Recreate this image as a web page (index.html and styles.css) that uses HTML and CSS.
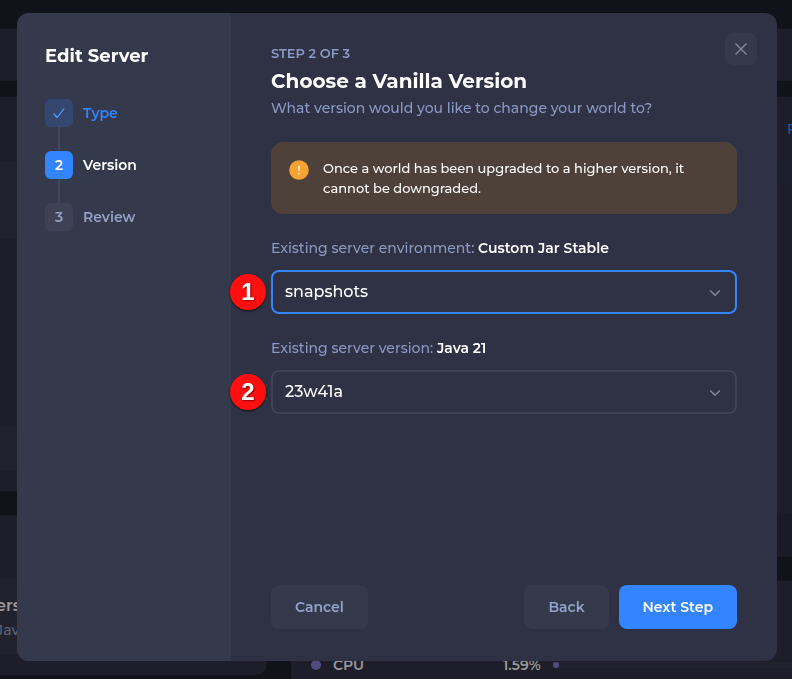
FILE: index.html
```html
<!DOCTYPE html>
<html lang="en">
<head>
<meta charset="utf-8">
<meta name="viewport" content="width=device-width, initial-scale=1">
<title>Edit Server</title>
<link rel="stylesheet" href="styles.css">
</head>
<body>
<div class="page">
  <div class="topbar"></div>
  <div class="columns">
    <div class="column">
      <section class="card card-list">
        <div class="row row-tall"></div>
        <div class="row row-short"></div>
      </section>
      <section class="card card-server">
        <div class="row server">
          <strong class="server-name">ers</strong>
          <span class="server-type">Jav</span>
        </div>
      </section>
    </div>
    <div class="column">
      <section class="card card-files">
        <a class="files-link" href="#">F</a>
        <div class="files-row"></div>
        <div class="files-foot"></div>
      </section>
      <section class="card card-stats">
        <div class="stat">
          <span class="dot"></span>
          <span class="stat-name">CPU</span>
          <span class="stat-value">1.59%</span>
          <span class="meter"><span class="meter-fill"></span></span>
        </div>
      </section>
    </div>
  </div>
</div>

<div class="overlay">
  <div class="modal" role="dialog" aria-labelledby="dialog-title">
    <aside class="side">
      <h1 class="side-title">Edit Server</h1>
      <ol class="steps">
        <li class="step done">
          <span class="step-mark"><svg width="14" height="14" viewBox="0 0 14 14" aria-hidden="true"><path d="M1.800 7.600 5 11.500 12.200 2.500"/></svg></span>
          <span>Type</span>
        </li>
        <li class="step current"><span class="step-mark">2</span><span>Version</span></li>
        <li class="step"><span class="step-mark">3</span><span>Review</span></li>
      </ol>
    </aside>
    <main class="content">
      <header class="head">
        <div>
          <p class="eyebrow">STEP 2 OF 3</p>
          <h2 class="title" id="dialog-title">Choose a Vanilla Version</h2>
          <p class="lead">What version would you like to change your world to?</p>
        </div>
        <button class="close" type="button" aria-label="Close"><svg width="14" height="14" viewBox="0 0 14 14" aria-hidden="true"><path d="M1.500 1.500l11 11M12.500 1.500l-11 11"/></svg></button>
      </header>
      <div class="notice">
        <svg class="notice-icon" width="20" height="20" viewBox="0 0 20 20" aria-hidden="true"><circle cx="10" cy="10" r="9.800"/><path d="M9.200 6h1.600l-.3 5.400H9.500z"/><circle class="point" cx="10" cy="13.700" r=".8"/></svg>
        <p>Once a world has been upgraded to a higher version, it cannot be downgraded.</p>
      </div>
      <form class="form">
        <div class="field">
          <label for="environment">Existing server environment: <b>Custom Jar Stable</b></label>
          <div class="select focused">
            <span class="callout">1</span>
            <select id="environment"><option>snapshots</option></select>
            <svg class="chevron" width="12" height="8" viewBox="0 0 12 8" aria-hidden="true"><path d="M1.200 1.500 6 6.200l4.800-4.700"/></svg>
          </div>
        </div>
        <div class="field">
          <label for="version">Existing server version: <b>Java 21</b></label>
          <div class="select">
            <span class="callout">2</span>
            <select id="version"><option>23w41a</option></select>
            <svg class="chevron" width="12" height="8" viewBox="0 0 12 8" aria-hidden="true"><path d="M1.200 1.500 6 6.200l4.800-4.700"/></svg>
          </div>
        </div>
      </form>
      <footer class="actions">
        <button class="btn cancel" type="button">Cancel</button>
        <button class="btn" type="button">Back</button>
        <button class="btn primary" type="button">Next Step</button>
      </footer>
    </main>
  </div>
</div>
</body>
</html>
```

FILE: styles.css
```css
* { box-sizing: border-box; }

body {
  margin: 0;
  background: #11131b;
  color: #fff;
  font-family: Montserrat, Inter, "Open Sans", sans-serif;
  font-size: 14px;
  line-height: 20px;
  font-weight: 500;
}

h1, h2, p, ol { margin: 0; padding: 0; }
button, select { font: inherit; }

/* Dimmed page behind the dialog */
.page {
  height: 100vh;
  overflow: hidden;
  display: flex;
  flex-direction: column;
  padding-top: 29px;
}
.topbar { flex: none; height: 52px; background: #1d1e29; }
.columns {
  flex: 1;
  min-height: 0;
  display: grid;
  grid-template-columns: 267px 1fr;
  gap: 24px;
  margin-top: 16px;
}
.column { display: flex; flex-direction: column; gap: 24px; min-width: 0; }
.card { flex: none; background: #1d1e29; }
.row { background: #21222d; }
.card-list { height: 394px; padding: 64px 0 20px; display: flex; flex-direction: column; justify-content: space-between; }
.row-tall { height: 78px; }
.row-short { height: 44px; }
.card-server { height: 160px; padding: 64px 0 20px; border-radius: 0 0 12px 0; }
.server { height: 76px; margin-left: -4px; padding-top: 17px; display: flex; flex-direction: column; align-items: flex-start; gap: 4px; color: #999; }
.server-name { font-size: 16px; font-weight: 600; }
.server-type { color: #5a647c; }
.card-files { height: 460px; padding-top: 22px; display: flex; flex-direction: column; gap: 22px; }
.files-link { align-self: flex-end; margin-right: -4px; color: #2857a0; text-decoration: none; }
.files-row { height: 24px; background: #1b202e; }
.files-foot { height: 44px; margin-top: auto; background: #1a1b26; }
.card-stats { height: 120px; padding: 74px 0 0 20px; }
.stat { display: flex; align-items: center; color: #999; font-weight: 600; }
.dot { width: 10px; height: 10px; border-radius: 50%; background: #514c80; }
.stat-name { width: 182px; padding-left: 12px; }
.stat-value { width: 50px; }
.meter { flex: 1; height: 6px; background: #21222d; }
.meter-fill { display: block; width: 6px; height: 6px; border-radius: 50%; background: #514c80; }

/* Dialog */
.overlay { position: fixed; inset: 0; display: flex; padding: 13px 15px 18px 17px; }
.modal {
  flex: 1;
  display: grid;
  grid-template-columns: 214px 1fr;
  border-radius: 12px;
  overflow: hidden;
  background: #2f3144;
}
.side { background: #35394c; padding: 30px 28px; }
.side-title { font-size: 18px; line-height: 26px; font-weight: 700; }
.steps { list-style: none; margin-top: 30px; display: grid; gap: 24px; }
.step { position: relative; display: flex; align-items: center; gap: 10px; color: #94a0c4; font-weight: 600; }
.step + .step::before { content: ""; position: absolute; left: 13px; bottom: 100%; width: 2px; height: 24px; background: #44475b; }
.step-mark { width: 28px; height: 28px; border-radius: 6px; display: grid; place-items: center; background: #3f4257; }
.done { color: #3385ff; }
.done .step-mark { background: #344770; }
.current { color: #fff; }
.current .step-mark { background: #3385ff; }
svg { display: block; fill: none; }
.done svg { stroke: #58a0ff; stroke-width: 1.2; }

.content { display: flex; flex-direction: column; padding: 20px 20px 32px 40px; min-width: 0; }
.head { display: flex; justify-content: space-between; align-items: flex-start; }
.head > div { padding-top: 10px; }
.eyebrow { font-size: 13px; font-weight: 600; color: #8b9ac4; }
.title { margin: 2px 0 1px; font-size: 20px; line-height: 32px; font-weight: 700; }
.lead { color: #8b9ac4; }
.close {
  width: 32px; height: 32px; padding: 0; border: 0; border-radius: 8px;
  background: #35394c; display: grid; place-items: center;
}
.close svg { stroke: #85879f; stroke-width: 1.4; }
.notice {
  display: flex; gap: 14px; margin: 24px 20px 0 0; padding: 16px 40px 16px 18px;
  border-radius: 12px; background: #4e4139; font-size: 13px;
}
.notice-icon { flex: none; margin-top: 2px; fill: #f6a333; }
.notice-icon path, .point { fill: #fff; }
.form { display: grid; gap: 24px; margin: 24px 20px 0 0; }
.field { display: grid; gap: 12px; }
.field label { color: #8b9ac4; }
.field b { color: #fff; font-weight: 600; }
.select { position: relative; }
.select select {
  display: block; width: 100%; height: 44px; padding: 0 40px 0 12px;
  appearance: none; border: 2px solid #3f4155; border-radius: 8px;
  background: transparent; color: #fff; font-size: 16px; outline: 0;
}
.focused select { border-color: #3385ff; }
.chevron { position: absolute; right: 16px; top: 19px; stroke: #85879f; stroke-width: 1.5; pointer-events: none; }
.callout {
  position: absolute; left: -41px; top: 4px; width: 36px; height: 36px; border-radius: 50%;
  display: grid; place-items: center; background: #ff1010; box-shadow: 0 1px 2px #111;
  font-family: "Liberation Sans", sans-serif; font-size: 24px; font-weight: 700; text-shadow: 1px 1px 2px #800;
}
.actions { display: flex; gap: 10px; margin: auto 20px 0 0; }
.btn {
  height: 44px; padding: 0 24px; border: 0; border-radius: 8px;
  background: #35394c; color: #94a3cb; font-weight: 600;
}
.cancel { margin-right: auto; }
.primary { background: #3385ff; color: #fff; }
```
